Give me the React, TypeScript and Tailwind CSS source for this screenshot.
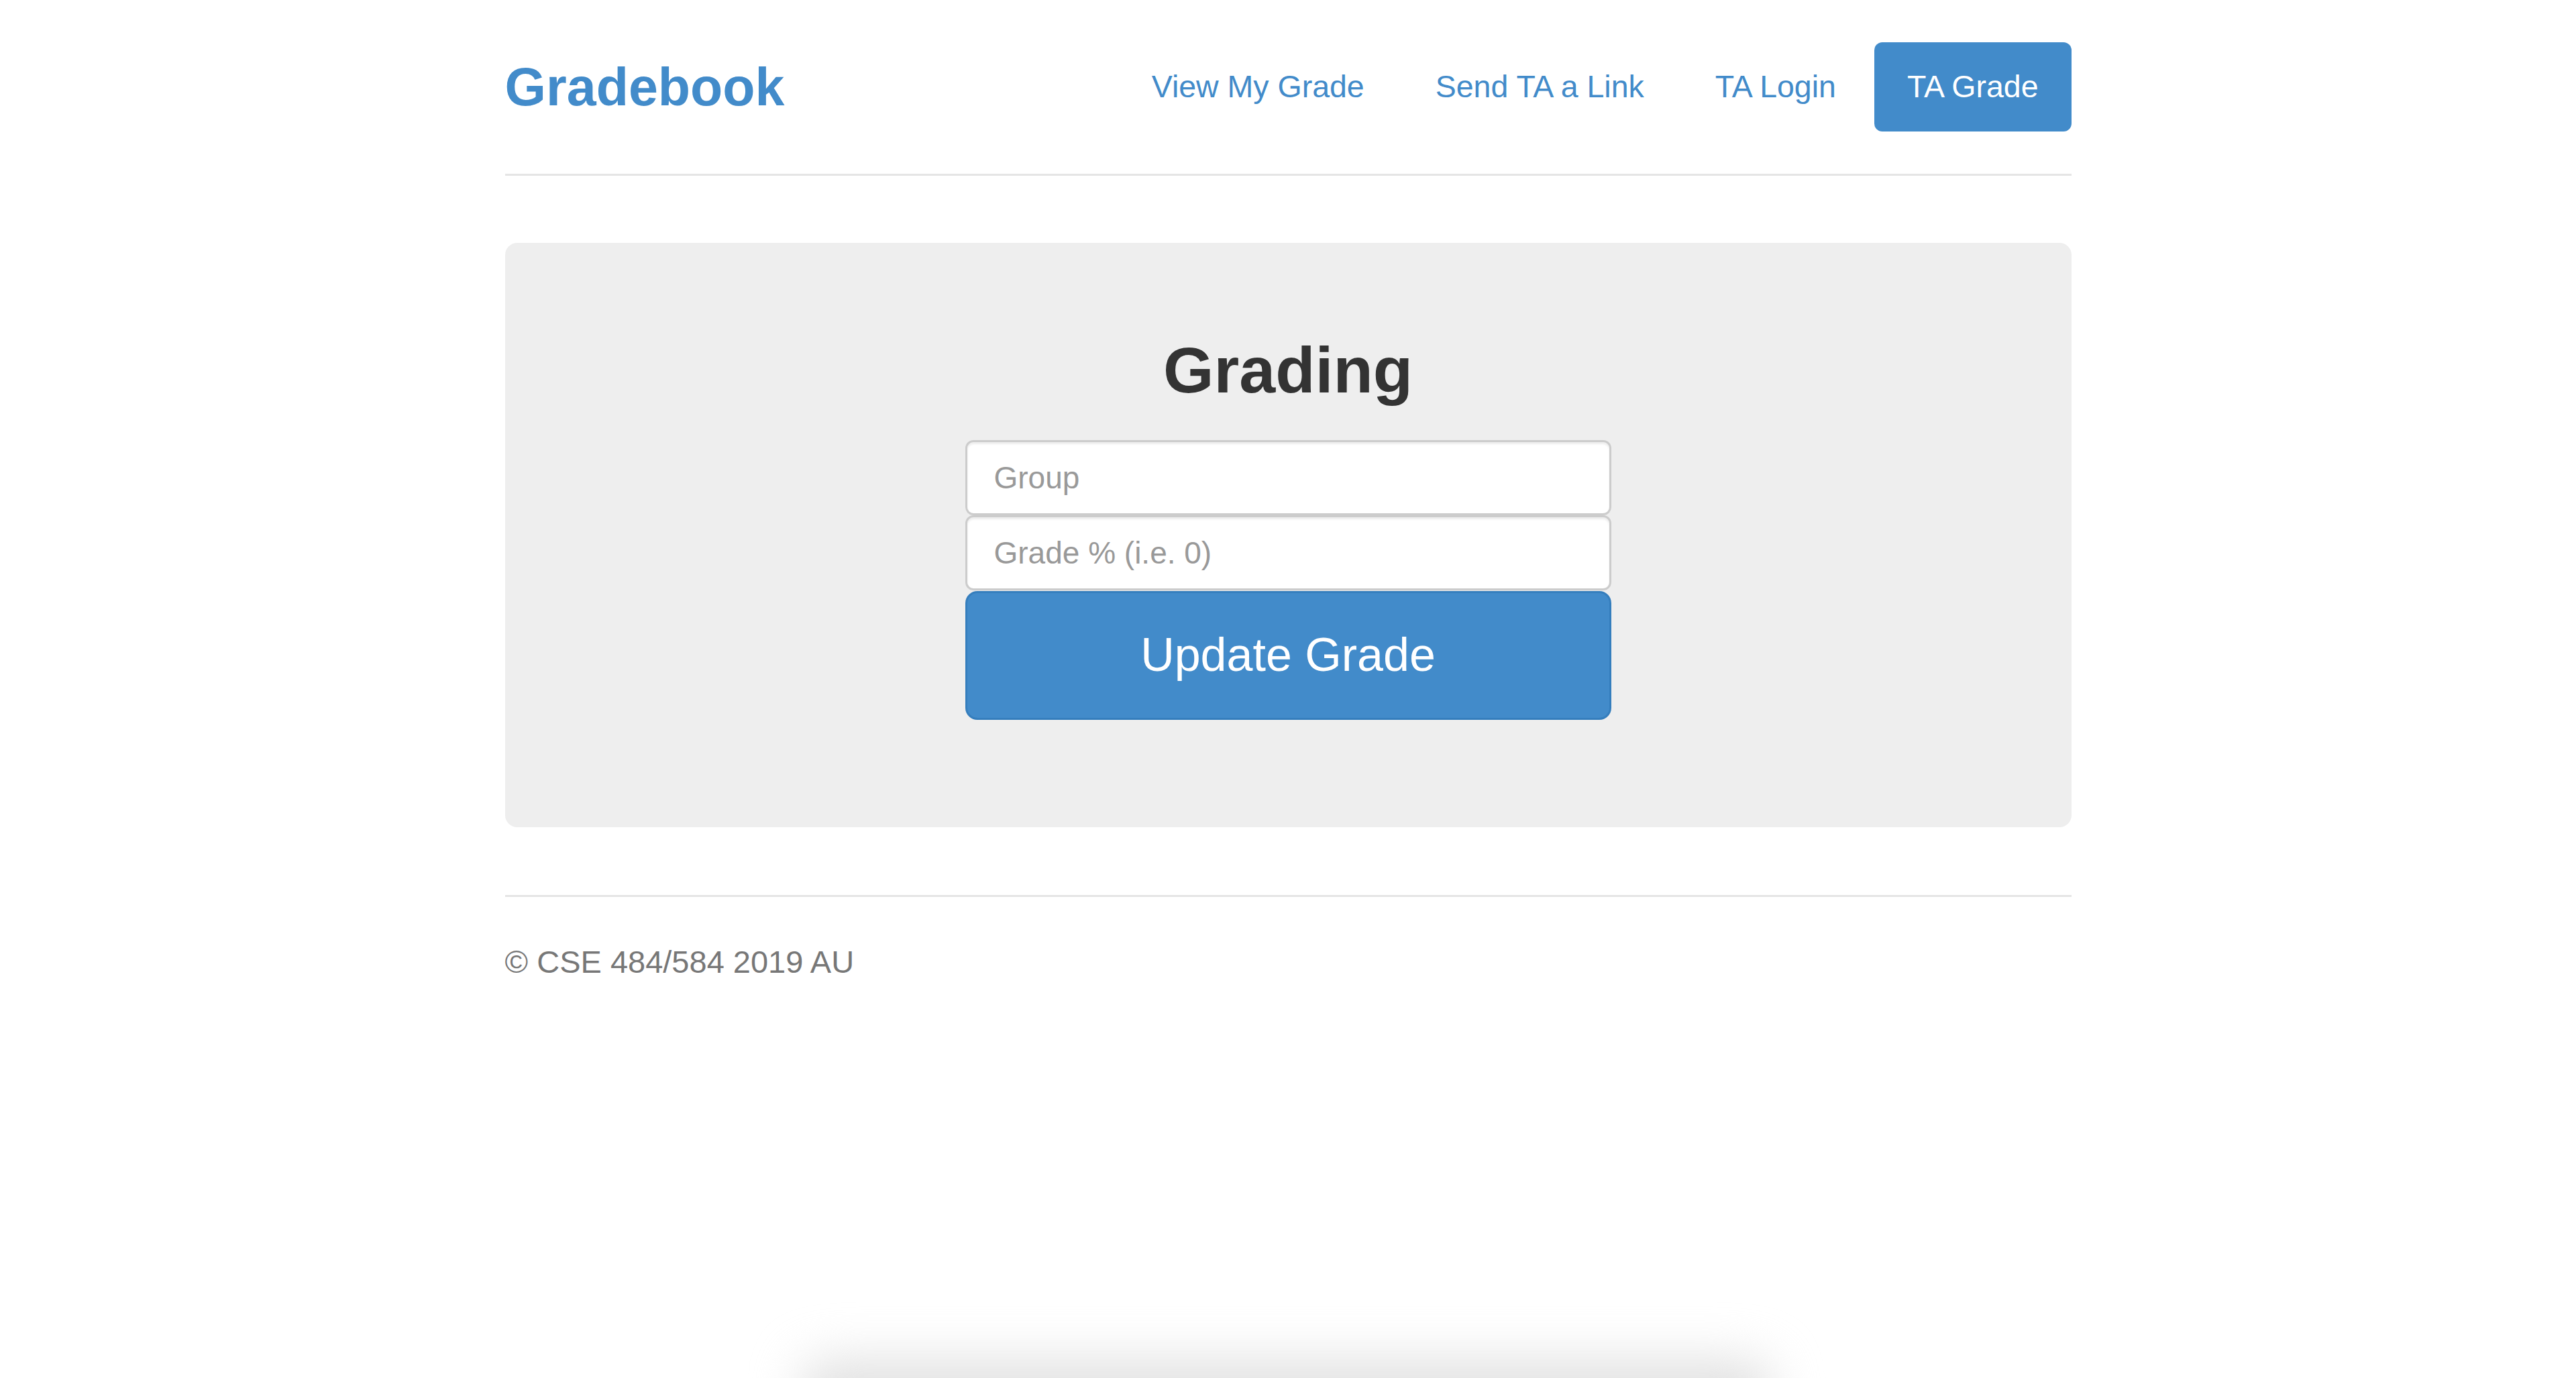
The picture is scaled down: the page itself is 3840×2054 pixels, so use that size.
import React from "react";

const navItems = [
  { label: "View My Grade", active: false },
  { label: "Send TA a Link", active: false },
  { label: "TA Login", active: false },
  { label: "TA Grade", active: true },
];

export default function App() {
  return (
    <div className="relative min-h-[2054px] overflow-hidden bg-white font-['Liberation_Sans',Arial,sans-serif] text-[#333]">
      <div className="mx-auto w-[2335px] pt-[63px]">
        {/* Header */}
        <header className="flex items-center justify-between border-b-[3px] border-[#e5e5e5] pb-[63px]">
          <h3 className="text-[79px] font-bold leading-none text-[#428bca]">Gradebook</h3>
          <nav className="flex gap-[8px]">
            {navItems.map((item) => (
              <a
                key={item.label}
                href="#"
                className={`flex h-[133px] items-center rounded-[12px] px-[49px] text-[46.5px] leading-none ${
                  item.active ? "bg-[#428bca] text-white" : "text-[#428bca]"
                }`}
              >
                {item.label}
              </a>
            ))}
          </nav>
        </header>

        {/* Jumbotron */}
        <section className="mt-[100px] flex flex-col items-center rounded-[18px] bg-[#eeeeee] pt-[137px] pb-[160px]">
          <h1 className="mb-[50px] text-[97px] font-bold leading-[1.1] text-[#333]">Grading</h1>
          <form className="flex w-[963px] flex-col" onSubmit={(e) => e.preventDefault()}>
            <input
              type="text"
              placeholder="Group"
              className="h-[112px] rounded-[12px] border-[3px] border-[#ccc] bg-white px-[40px] text-[46px] text-[#555] shadow-[inset_0_3px_3px_rgba(0,0,0,0.075)] outline-none placeholder:text-[#999]"
            />
            <input
              type="text"
              placeholder="Grade % (i.e. 0)"
              className="h-[112px] rounded-[12px] border-[3px] border-[#ccc] bg-white px-[40px] text-[46px] text-[#555] shadow-[inset_0_3px_3px_rgba(0,0,0,0.075)] outline-none placeholder:text-[#999]"
            />
            <button
              type="submit"
              className="mt-[1px] h-[192px] rounded-[18px] border-[3px] border-[#357ebd] bg-[#428bca] text-[70px] text-white"
            >
              Update Grade
            </button>
          </form>
        </section>

        {/* Footer */}
        <footer className="mt-[101px] border-t-[3px] border-[#e5e5e5] pt-[64px]">
          <p className="text-[47px] leading-[66px] text-[#777]">© CSE 484/584 2019 AU</p>
        </footer>
      </div>

      {/* soft shadow along the bottom edge */}
      <div className="pointer-events-none absolute left-[1195px] top-[2025px] h-[120px] w-[1445px] rounded-[40px] bg-[#e2e2e2] blur-[35px]" />
    </div>
  );
}
